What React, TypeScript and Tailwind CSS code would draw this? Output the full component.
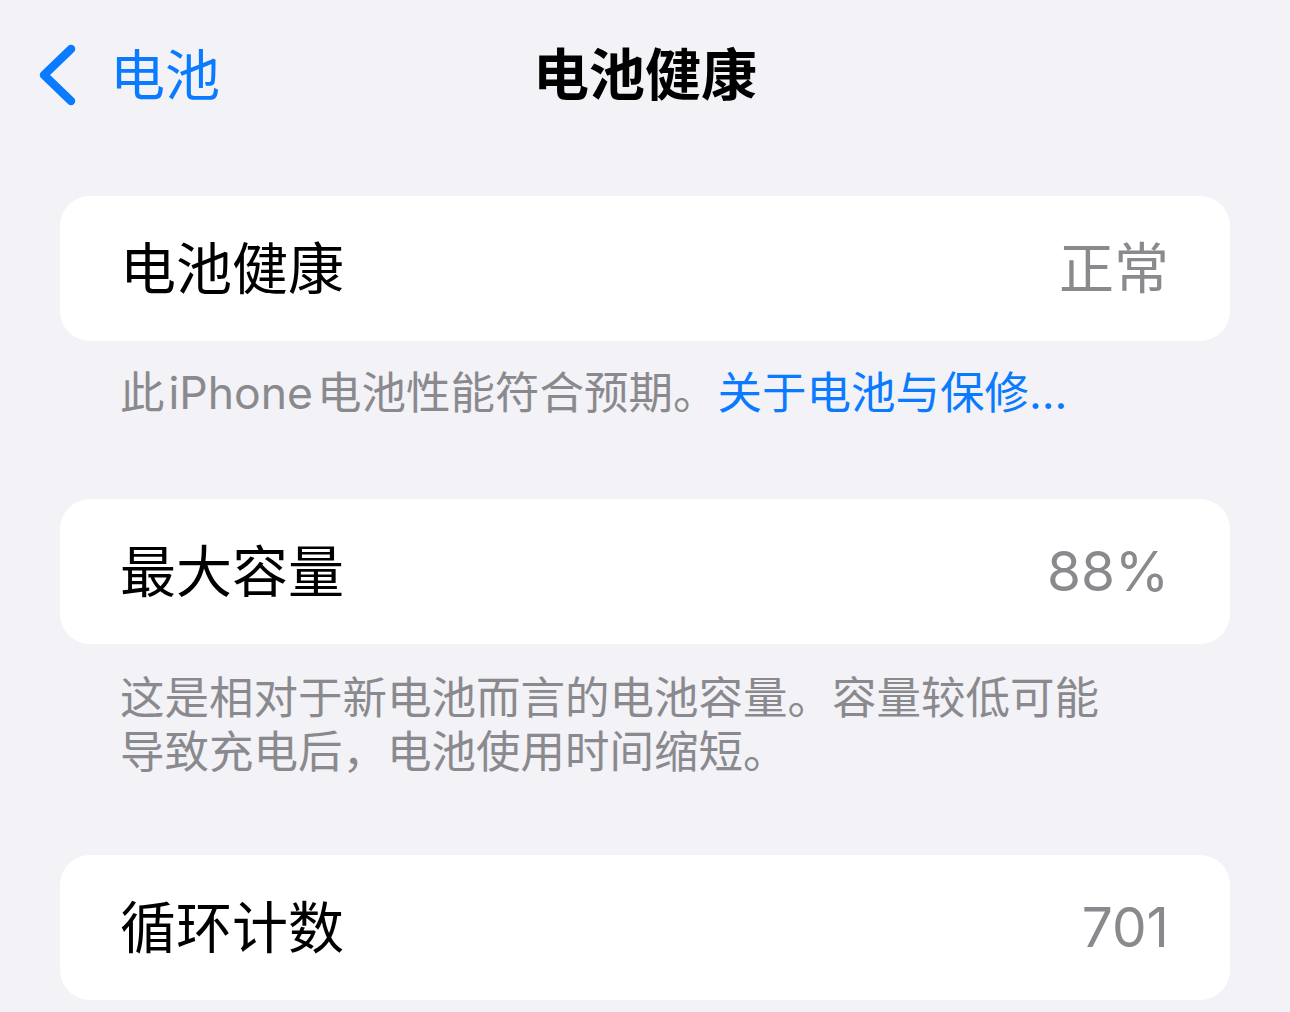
import React from 'react';

const font = { fontFamily: 'Inter, "Noto Sans CJK SC", sans-serif' };

function Row({ label, value }: { label: string; value: string }) {
  return (
    <div className="mx-[60px] h-[145px] rounded-[30px] bg-white flex items-center justify-between pl-[60px] pr-[61px]">
      <span className="text-[56px] leading-none text-black">{label}</span>
      <span className="text-[55px] leading-none text-[#8a8a8e]">{value}</span>
    </div>
  );
}

export default function App() {
  return (
    <div className="w-[1290px] h-[1012px] bg-[#f2f2f7] overflow-hidden" style={font}>
      <div className="relative h-[150px] flex items-center justify-center">
        <div className="absolute left-[36px] top-0 h-[150px] flex items-center gap-[30px]">
          <svg width="44" height="64" viewBox="0 0 44 64" fill="none">
            <path d="M35 6 L8 32 L35 58" stroke="#0a7aff" strokeWidth="8.5" strokeLinecap="round" strokeLinejoin="round" />
          </svg>
          <span className="text-[55px] leading-none text-[#0a7aff]">电池</span>
        </div>
        <h1 className="text-[56px] leading-none font-semibold text-black">电池健康</h1>
      </div>

      <div className="mt-[46px]">
        <Row label="电池健康" value="正常" />
      </div>
      <p className="mt-[25px] pl-[120px] text-[44.5px] leading-[54px] text-[#8a8a8e]">
        此<span className="ml-[4px] mr-[4px]">iPhone</span>电池性能符合预期。<span className="text-[#0a7aff]">关于电池与保修...</span>
      </p>

      <div className="mt-[79px]">
        <Row label="最大容量" value="88%" />
      </div>
      <p className="mt-[27px] pl-[120px] text-[44.5px] leading-[54px] text-[#8a8a8e]">
        这是相对于新电池而言的电池容量。容量较低可能
        <br />
        导致充电后，电池使用时间缩短。
      </p>

      <div className="mt-[76px]">
        <Row label="循环计数" value="701" />
      </div>
    </div>
  );
}
